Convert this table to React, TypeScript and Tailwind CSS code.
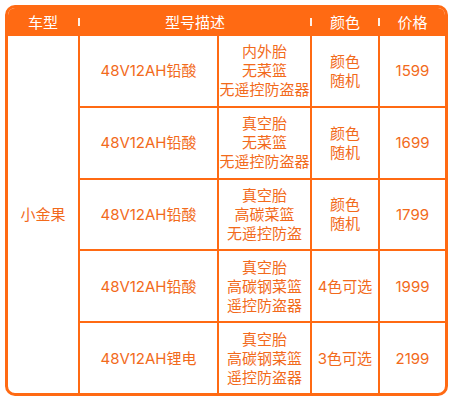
const ORANGE = 'border-[#ff6a13]'

type Row = { model: string; desc: string[]; color: string[]; price: string }

const ROWS: Row[] = [
  { model: '48V12AH铅酸', desc: ['内外胎', '无菜篮', '无遥控防盗器'], color: ['颜色', '随机'], price: '1599' },
  { model: '48V12AH铅酸', desc: ['真空胎', '无菜篮', '无遥控防盗器'], color: ['颜色', '随机'], price: '1699' },
  { model: '48V12AH铅酸', desc: ['真空胎', '高碳菜篮', '无遥控防盗'], color: ['颜色', '随机'], price: '1799' },
  { model: '48V12AH铅酸', desc: ['真空胎', '高碳钢菜篮', '遥控防盗器'], color: ['4色可选'], price: '1999' },
  { model: '48V12AH锂电', desc: ['真空胎', '高碳钢菜篮', '遥控防盗器'], color: ['3色可选'], price: '2199' },
]

function HeaderSep() {
  return (
    <div className="w-[2px] shrink-0 flex justify-center">
      <div className="w-[1.5px] h-[8px] bg-white/90" />
    </div>
  )
}

export default function App() {
  return (
    <div className="w-[459px] h-[403px] bg-white pt-[5px] pl-[5px]" style={{ fontFamily: 'Inter, "Noto Sans CJK SC", sans-serif' }}>
      <div className={`w-[443px] h-[391px] border-[3px] ${ORANGE} rounded-[10px] overflow-hidden flex flex-col text-[15px] leading-[19px] text-[#f26a1b]`}>
        {/* header */}
        <div className="h-[28px] shrink-0 bg-[#ff6a13] text-white flex items-center">
          <div className="w-[70px] shrink-0 text-center">车型</div>
          <HeaderSep />
          <div className="w-[230px] shrink-0 text-center">型号描述</div>
          <HeaderSep />
          <div className="w-[66px] shrink-0 text-center">颜色</div>
          <HeaderSep />
          <div className="flex-1 text-center">价格</div>
        </div>

        {/* body */}
        <div className="flex-1 flex">
          <div className={`w-[72px] shrink-0 border-r-2 ${ORANGE} flex items-center justify-center`}>小金果</div>
          <div className="flex-1 flex flex-col">
            {ROWS.map((r, i) => (
              <div key={i} className={`flex-1 flex ${i < ROWS.length - 1 ? `border-b-2 ${ORANGE}` : ''}`}>
                <div className={`w-[139px] shrink-0 border-r-2 ${ORANGE} flex items-center justify-center`}>{r.model}</div>
                <div className={`w-[93px] shrink-0 border-r-2 ${ORANGE} flex flex-col items-center justify-center text-center`}>
                  {r.desc.map((d) => <div key={d} className="whitespace-nowrap">{d}</div>)}
                </div>
                <div className={`w-[68px] shrink-0 border-r-2 ${ORANGE} flex flex-col items-center justify-center`}>
                  {r.color.map((c) => <div key={c} className="whitespace-nowrap">{c}</div>)}
                </div>
                <div className="flex-1 flex items-center justify-center">{r.price}</div>
              </div>
            ))}
          </div>
        </div>
      </div>
    </div>
  )
}
